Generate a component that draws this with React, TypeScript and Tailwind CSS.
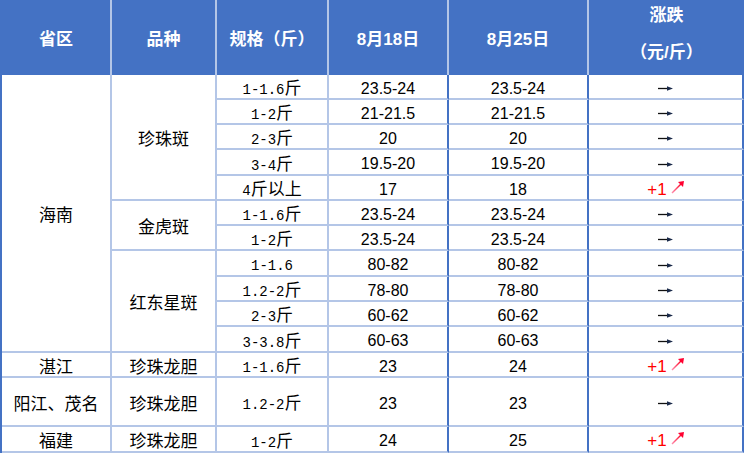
import React from "react";

type Row = {
  prov?: string;
  provSpan?: string;
  kind?: string;
  kindSpan?: string;
  spec: string;
  a: string;
  b: string;
  up?: boolean;
};

const rows: Row[] = [
  { prov: "海南", provSpan: "row-span-11", kind: "珍珠斑", kindSpan: "row-span-5", spec: "1-1.6斤", a: "23.5-24", b: "23.5-24" },
  { spec: "1-2斤", a: "21-21.5", b: "21-21.5" },
  { spec: "2-3斤", a: "20", b: "20" },
  { spec: "3-4斤", a: "19.5-20", b: "19.5-20" },
  { spec: "4斤以上", a: "17", b: "18", up: true },
  { kind: "金虎斑", kindSpan: "row-span-2", spec: "1-1.6斤", a: "23.5-24", b: "23.5-24" },
  { spec: "1-2斤", a: "23.5-24", b: "23.5-24" },
  { kind: "红东星斑", kindSpan: "row-span-4", spec: "1-1.6", a: "80-82", b: "80-82" },
  { spec: "1.2-2斤", a: "78-80", b: "78-80" },
  { spec: "2-3斤", a: "60-62", b: "60-62" },
  { spec: "3-3.8斤", a: "60-63", b: "60-63" },
  { prov: "湛江", provSpan: "row-span-1", kind: "珍珠龙胆", kindSpan: "row-span-1", spec: "1-1.6斤", a: "23", b: "24", up: true },
  { prov: "阳江、茂名", provSpan: "row-span-1", kind: "珍珠龙胆", kindSpan: "row-span-1", spec: "1.2-2斤", a: "23", b: "23" },
  { prov: "福建", provSpan: "row-span-1", kind: "珍珠龙胆", kindSpan: "row-span-1", spec: "1-2斤", a: "24", b: "25", up: true },
];

const cjk = "font-['Noto_Sans_CJK_SC',sans-serif]";
const light = "border-r-2 border-b-2 border-[#b4c6e7]";
const num =
  "border-b-2 border-b-[#b4c6e7] border-r-2 border-r-[#4472c4] flex items-center justify-center pt-[4px] font-['Liberation_Sans',sans-serif] text-[16px]";

// half-width parts in a mono face, CJK parts full size
function Spec({ text }: { text: string }) {
  const parts = text.split(/([^\x00-\x7f]+)/).filter(Boolean);
  return (
    <span>
      {parts.map((p, i) =>
        /[^\x00-\x7f]/.test(p) ? (
          <span key={i} className={`${cjk} text-[17px]`}>{p}</span>
        ) : (
          <span key={i} className="font-['Liberation_Mono',monospace] text-[14px]">{p}</span>
        )
      )}
    </span>
  );
}

function Flat() {
  return (
    <svg width="15" height="7" viewBox="0 0 15 7">
      <line x1="0" y1="3.5" x2="11" y2="3.5" stroke="#111" strokeWidth="1.3" />
      <polygon points="9,1.3 15,3.5 9,5.7" fill="#1a2a4a" />
    </svg>
  );
}

function Up() {
  return (
    <span className="inline-flex items-center gap-[4px]">
      <span className="text-[#ff0000] text-[17px]">+1</span>
      <svg width="13" height="13" viewBox="0 0 13 13" className="-mt-[5px]">
        <defs>
          <linearGradient id="ug" x1="0" y1="1" x2="1" y2="0">
            <stop offset="0" stopColor="#ff8fb0" />
            <stop offset="1" stopColor="#ff0020" />
          </linearGradient>
        </defs>
        <line x1="1" y1="12" x2="10" y2="3" stroke="url(#ug)" strokeWidth="1.5" />
        <polygon points="13,0 12,6 7,1" fill="#ff0030" />
      </svg>
    </span>
  );
}

export default function App() {
  return (
    <div className="w-[744px] h-[453px] bg-white overflow-hidden">
      <div className="grid grid-cols-[110px_105px_112px_120px_140px_155px] grid-rows-[75px_25px_25px_25px_26px_25px_25px_25px_26px_25px_25px_26px_25px_49px_26px] border-l-2 border-[#4472c4] text-black">
        {/* header */}
        {["省区", "品种", "规格（斤）", "8月18日", "8月25日"].map((h) => (
          <div
            key={h}
            className="flex items-center justify-center pt-[5px] bg-[#4472c4] border-r-2 border-[#b4c6e7] text-white text-[17px] font-bold font-['Liberation_Sans','Noto_Sans_CJK_SC',sans-serif]"
          >
            {h}
          </div>
        ))}
        <div className="flex flex-col items-center gap-[13px] pt-[4px] bg-[#4472c4] text-white text-[17px] leading-[24px] font-bold font-['Liberation_Sans','Noto_Sans_CJK_SC',sans-serif]">
          <span>涨跌</span>
          <span>（元/斤）</span>
        </div>

        {/* body */}
        {rows.map((r, i) => (
          <React.Fragment key={i}>
            {r.prov && (
              <div className={`${r.provSpan} ${light} flex items-center justify-center pt-[2px] ${cjk} text-[17px]`}>
                {r.prov}
              </div>
            )}
            {r.kind && (
              <div className={`${r.kindSpan} ${light} flex items-center justify-center pt-[2px] ${cjk} text-[17px]`}>
                {r.kind}
              </div>
            )}
            <div className={`${light} flex items-center justify-center pt-[2px]`}>
              <Spec text={r.spec} />
            </div>
            <div className={num}>{r.a}</div>
            <div className={num}>{r.b}</div>
            <div className={num}>{r.up ? <Up /> : <Flat />}</div>
          </React.Fragment>
        ))}
      </div>
    </div>
  );
}
